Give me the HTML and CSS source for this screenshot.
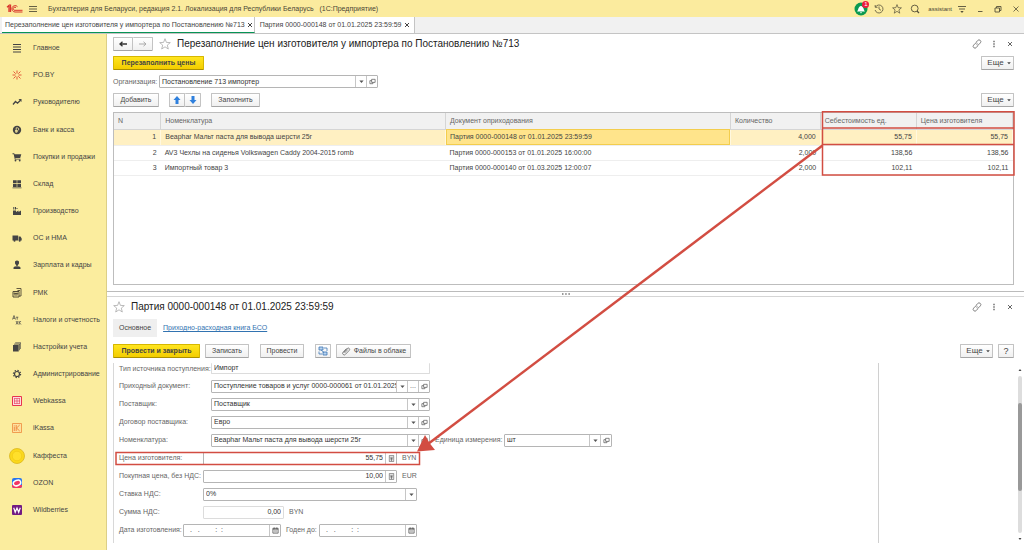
FILE: index.html
```html
<!DOCTYPE html>
<html lang="ru">
<head>
<meta charset="utf-8">
<title>Бухгалтерия для Беларуси</title>
<link rel="stylesheet" href="styles.css">
</head>
<body>
<svg class="defs" aria-hidden="true">
  <symbol id="star" viewBox="0 0 12 12"><path d="M6 .7l1.400 3.700 3.900.2-3 2.500 1 3.900L6 8.800 2.700 11l1-3.900-3-2.500 3.900-.2z" fill="none" stroke="currentColor" stroke-width=".8"/></symbol>
  <symbol id="open" viewBox="0 0 8 8"><path d="M3 1.500h4v3.500H3zM3 3H1v3.500h3.500V5" fill="none" stroke="currentColor" stroke-width=".8"/></symbol>
  <symbol id="down" viewBox="0 0 6 6"><path d="M1.200 2.200h3.600L3 4.300z" fill="currentColor"/></symbol>
  <symbol id="calc" viewBox="0 0 8 8"><path d="M1.500.5h5v7h-5zM2 2.500h4M2.500 4h3M2.500 5.500h3M4 3v4" fill="none" stroke="currentColor" stroke-width=".7"/></symbol>
  <symbol id="cal" viewBox="0 0 8 8"><path d="M1 1.500h6V7H1zM1 2.500h6M2.500 0.500v2M5.500.5v2" fill="none" stroke="currentColor" stroke-width=".9"/><path d="M2 4.200h4M2 5.500h4" stroke="currentColor" stroke-width=".5"/></symbol>
  <symbol id="link" viewBox="0 0 10 10"><path d="M4.200 3.200l1.500-1.700a1.700 1.700 0 0 1 2.700 2.300L6.800 5.600a1.600 1.600 0 0 1-2.300 0M5.800 6.800L4.300 8.500a1.700 1.700 0 0 1-2.700-2.300l1.600-1.800a1.600 1.600 0 0 1 2.300 0" fill="none" stroke="currentColor" stroke-width=".8"/></symbol>
  <symbol id="dots" viewBox="0 0 8 8"><path d="M3.300.8h1.400v1.400H3.300zM3.300 3.300h1.400v1.400H3.300zM3.300 5.800h1.400v1.400H3.300z" fill="currentColor"/></symbol>
  <symbol id="cross" viewBox="0 0 8 8"><path d="M2 2l4 4M6 2L2 6" stroke="currentColor" fill="none"/></symbol>
</svg>

<header class="titlebar">
  <svg class="logo" viewBox="0 0 18 12"><path d="M1 4.200L3 2.500V9M4.500 9V1.500" fill="none" stroke="#d9342b" stroke-width="1.300"/><path d="M11.500 3.700A3.200 3.200 0 1 0 9 9h7.500M10 4.800A1.600 1.600 0 1 0 9 7.300h7.500" fill="none" stroke="#d9342b" stroke-width="1"/></svg>
  <button class="icon-btn" aria-label="Меню"><svg viewBox="0 0 10 10"><path d="M1 2.500h8M1 5h8M1 7.500h8" stroke="#55503a" stroke-width=".9"/></svg></button>
  <span class="app-name">Бухгалтерия для Беларуси, редакция 2.1. Локализация для Республики Беларусь &nbsp; (1С:Предприятие)</span>
  <div class="tools">
    <button class="bell" aria-label="Уведомления"><svg viewBox="0 0 14 14"><circle cx="7" cy="7" r="6.500" fill="#0b9a50"/><path d="M3 9.500c1.500-1 1-5 4-5.500 3 .5 2.500 4.500 4 5.500zM5.800 10.300h2.400L7 11.500z" fill="#fff"/></svg><span class="badge">1</span></button>
    <button class="icon-btn" aria-label="История"><svg viewBox="0 0 10 10"><path d="M1.500 3a4 4 0 1 1-.4 3M1.200 1v2.300h2.300M5 2.500V5l2 1.300" fill="none" stroke="#55503a" stroke-width=".8"/></svg></button>
    <button class="icon-btn" aria-label="Избранное"><svg><use href="#star"/></svg></button>
    <button class="icon-btn" aria-label="Поиск"><svg viewBox="0 0 10 10"><circle cx="4.700" cy="4.500" r="3.400" fill="none" stroke="#55503a" stroke-width=".9"/><path d="M7 7l2 2" stroke="#55503a" stroke-width="1.300"/></svg></button>
    <span class="user">assistant</span>
    <button class="icon-btn" aria-label="Настройки"><svg viewBox="0 0 10 10"><path d="M1 2.500h8M2 5h6" stroke="#55503a" stroke-width=".9"/><path d="M3.300 7h3.400L5 9z" fill="#55503a"/></svg></button>
    <button class="icon-btn" aria-label="Свернуть"><svg viewBox="0 0 10 10"><path d="M3 7.500h4.500" stroke="#55503a" stroke-width=".9"/></svg></button>
    <button class="icon-btn" aria-label="Окно"><svg viewBox="0 0 10 10"><path d="M2 4h4.500v4H2zM3.500 4V2.500h4.500v4H6.500" fill="none" stroke="#55503a" stroke-width=".9"/></svg></button>
    <button class="icon-btn" aria-label="Закрыть"><svg viewBox="0 0 10 10"><path d="M2.500 2.500l5 5M7.500 2.500l-5 5" stroke="#55503a" stroke-width=".8"/></svg></button>
  </div>
</header>

<div class="tabs">
  <div class="tab active"><span>Перезаполнение цен изготовителя у импортера по Постановлению №713</span><button aria-label="Закрыть вкладку"><svg><use href="#cross"/></svg></button></div>
  <div class="tab"><span>Партия 0000-000148 от 01.01.2025 23:59:59</span><button aria-label="Закрыть вкладку"><svg><use href="#cross"/></svg></button></div>
</div>

<div class="body">
<nav class="side">
  <a href="#"><svg viewBox="0 0 12 12"><path d="M2 2.500h8M2 5h8M2 7.500h8M2 10h8" stroke="#444" stroke-width="1.200"/></svg>Главное</a>
  <a href="#"><svg viewBox="0 0 12 12"><path d="M6 1.500v3M6 7.500v3M1.500 6h3M7.500 6h3M2.500 2.500l2.200 2.200M7.300 7.300l2.200 2.200M9.500 2.500L7.300 4.700M4.700 7.300L2.500 9.500" stroke="#e0492f" stroke-width=".9"/></svg>PO.BY</a>
  <a href="#"><svg viewBox="0 0 12 12"><path d="M2 8.500l2.500-3 2 1.700 3-3" fill="none" stroke="#444" stroke-width="1.300"/><path d="M7.500 3h3v3z" fill="#444"/></svg>Руководителю</a>
  <a href="#"><svg viewBox="0 0 12 12"><circle cx="6" cy="6" r="4.200" fill="#444"/><path d="M5.200 9V3.800h1.500a1.400 1.400 0 0 1 0 2.700H4M4 7.700h3" fill="none" stroke="#fbed9e" stroke-width=".8"/></svg>Банк и касса</a>
  <a href="#"><svg viewBox="0 0 12 12"><path d="M1.500 2.300h1.700l.4 1h6.700L9.200 7H4.300l.2.700h5v.8H3.800L2.700 3.200H1.500z" fill="#444"/><circle cx="4.500" cy="9.500" r=".9" fill="#444"/><circle cx="8.700" cy="9.500" r=".9" fill="#444"/></svg>Покупки и продажи</a>
  <a href="#"><svg viewBox="0 0 12 12"><path d="M2 2.300h3.700v3H2zM6.300 2.300H10v3H6.300zM2 5.900h3.700v3H2zM6.300 5.900H10v3H6.300zM1.500 9.500h9v.8h-9z" fill="#444"/></svg>Склад</a>
  <a href="#"><svg viewBox="0 0 12 12"><path d="M2 10V5.500h3V7l2.500-1.500V7L10 5.500V10zM2.300 2h1v2.500h-1zM4 2h1v2.500H4zM5.500 3h1v1h-1z" fill="#444"/></svg>Производство</a>
  <a href="#"><svg viewBox="0 0 12 12"><path d="M1.500 3.500h5.700v5H1.500zM7.700 4.500h1.800l1.200 2v2h-3z" fill="#444"/><circle cx="3.500" cy="8.800" r="1" fill="#444"/><circle cx="8.700" cy="8.800" r="1" fill="#444"/></svg>ОС и НМА</a>
  <a href="#"><svg viewBox="0 0 12 12"><path d="M4 2.500q2-2 4 0v2L7 6v.8H5V6L4 4.500zM2.500 10V8.500Q3 7.200 6 7.200t3.500 1.300V10z" fill="#444"/></svg>Зарплата и кадры</a>
  <a href="#"><svg viewBox="0 0 12 12"><path d="M2 4.500h6V10H2z" fill="#fbed9e" stroke="#514a35"/><path d="M5.500 1.500H10V9H8M6.500 3.500H9M3.200 6h1.300v1H3.200zM5.500 6h1.300v1H5.500zM3.200 8h3.500" stroke="#514a35" fill="none" stroke-width=".9"/></svg>РМК</a>
  <a href="#"><svg viewBox="0 0 12 12"><path d="M1.500 5.500l1.500-4 1.500 4M2 4.300h2M5 3.200h2.300M6.200 3.200v2.500M5 7l2 3.500M7 7l-2 3.500M8.200 7v3.500M10 7L8.500 8.700 10 10.500" fill="none" stroke="#444" stroke-width=".7"/></svg>Налоги и отчетность</a>
  <a href="#"><svg viewBox="0 0 12 12"><path d="M2 4h5.700v6.500H2zM3 2.700h5.900v6.500h-.7V3.500H3zM4.200 1.500H10v6.500h-.6V2.200H4.200z" fill="#444"/></svg>Настройки учета</a>
  <a href="#"><svg viewBox="0 0 12 12"><circle cx="6" cy="6" r="2.500" fill="none" stroke="#444" stroke-width="1.200"/><circle cx="6" cy="6" r="3.600" fill="none" stroke="#444" stroke-width="1.200" stroke-dasharray="1.410"/></svg>Администрирование</a>
  <a href="#"><svg viewBox="0 0 12 12"><path d="M1.500 1.500h9v9h-9z" fill="#fbdde0" stroke="#e8344e"/><path d="M3 3.500h6M3 6h6M3 8.500h6M3.500 3.500v5M6 3.500v5M8.500 3.500v5" stroke="#e8344e" stroke-width=".6"/></svg>Webkassa</a>
  <a href="#"><svg viewBox="0 0 12 12"><path d="M1.500 1.500h9v9h-9z" fill="#fde2a0" stroke="#ee8a3c" stroke-width=".8"/><path d="M3.300 4.500V9M3.300 3v.6M5.200 3v6M8.700 3L5.500 6l3.200 3" fill="none" stroke="#ee7a2c" stroke-width=".8"/></svg>iKassa</a>
  <a href="#"><svg class="big" viewBox="0 0 16 16"><circle cx="8" cy="8" r="7.500" fill="#fbd91c" stroke="#d9b520" stroke-width=".8"/><circle cx="8" cy="8" r="4.800" fill="#ffe02b" stroke="#efc512" stroke-width=".6"/></svg>Каффеста</a>
  <a href="#"><svg viewBox="0 0 12 12"><rect x="1" y="1" width="10" height="10" rx="2" fill="#2775ee"/><path d="M1 8h10v1q0 2-2 2H3q-2 0-2-2z" fill="#f33562"/><ellipse cx="6" cy="6" rx="3.800" ry="2.600" fill="#f33562" stroke="#fff" stroke-width="1.500" transform="rotate(-20 6 6)"/></svg>OZON</a>
  <a href="#"><svg viewBox="0 0 12 12"><rect x="1" y="1" width="10" height="10" rx="1" fill="#721b83"/><path d="M2.700 3.700l1.500 4.500L6 4l1.700 4.200 1.600-4.500" fill="none" stroke="#fff" stroke-width="1.200"/></svg>Wildberries</a>
</nav>

<main>
<section class="pane upper">
  <div class="row head">
    <div class="pair"><button class="btn" aria-label="Назад"><svg viewBox="0 0 10 8"><path d="M9 4H2.500M4.500 1.800L2 4l2.500 2.200" fill="none" stroke="#333" stroke-width="1.300"/></svg></button><button class="btn" aria-label="Вперед"><svg viewBox="0 0 10 8"><path d="M1 4h6.500M5.500 1.800L8 4 5.500 6.200" fill="none" stroke="#aaa"/></svg></button></div>
    <svg class="star"><use href="#star"/></svg>
    <h1>Перезаполнение цен изготовителя у импортера по Постановлению №713</h1>
    <div class="pane-tools"><button aria-label="Ссылка"><svg><use href="#link"/></svg></button><button aria-label="Меню"><svg><use href="#dots"/></svg></button><button aria-label="Закрыть"><svg><use href="#cross"/></svg></button></div>
  </div>
  <div class="row"><button class="btn primary refill">Перезаполнить цены</button><button class="btn more">Еще<svg><use href="#down"/></svg></button></div>
  <div class="row org"><label for="org">Организация:</label><div class="field"><input id="org" value="Постановление 713 импортер"><button aria-label="Выбрать"><svg><use href="#down"/></svg></button><button aria-label="Открыть"><svg><use href="#open"/></svg></button></div></div>
  <div class="row"><button class="btn add">Добавить</button>
    <div class="pair arrows"><button class="btn" aria-label="Вверх"><svg viewBox="0 0 10 10"><path d="M5 1l3.500 4h-2v4h-3V5h-2z" fill="#2f80dd"/></svg></button><button class="btn" aria-label="Вниз"><svg viewBox="0 0 10 10"><path d="M5 9L1.500 5h2V1h3v4h2z" fill="#2f80dd"/></svg></button></div>
    <button class="btn fill">Заполнить</button><button class="btn more">Еще<svg><use href="#down"/></svg></button></div>
  <div class="grid-box">
    <table>
      <colgroup><col class="c-n"><col class="c-item"><col class="c-doc"><col class="c-qty"><col class="c-cost"><col class="c-price"></colgroup>
      <thead><tr><th>N</th><th>Номенклатура</th><th>Документ оприходования</th><th>Количество</th><th>Себестоимость ед.</th><th>Цена изготовителя</th></tr></thead>
      <tbody>
        <tr class="selected"><td class="num">1</td><td>Beaphar Мальт паста для вывода шерсти 25г</td><td class="current">Партия 0000-000148 от 01.01.2025 23:59:59</td><td class="num">4,000</td><td class="num">55,75</td><td class="num">55,75</td></tr>
        <tr><td class="num">2</td><td>AV3 Чехлы на сиденья Volkswagen Caddy 2004-2015 romb</td><td>Партия 0000-000153 от 01.01.2025 16:00:00</td><td class="num">2,000</td><td class="num">138,56</td><td class="num">138,56</td></tr>
        <tr><td class="num">3</td><td>Импортный товар 3</td><td>Партия 0000-000140 от 01.03.2025 12:00:07</td><td class="num">2,000</td><td class="num">102,11</td><td class="num">102,11</td></tr>
      </tbody>
    </table>
  </div>
</section>

<div class="splitter"><svg viewBox="0 0 10 4"><path d="M1 2h1.500M4.200 2h1.500M7.400 2h1.500" stroke="#777" stroke-width="1.300"/></svg></div>

<section class="pane lower">
  <div class="row head">
    <svg class="star"><use href="#star"/></svg>
    <h1>Партия 0000-000148 от 01.01.2025 23:59:59</h1>
    <div class="pane-tools"><button aria-label="Ссылка"><svg><use href="#link"/></svg></button><button aria-label="Меню"><svg><use href="#dots"/></svg></button><button aria-label="Закрыть"><svg><use href="#cross"/></svg></button></div>
  </div>
  <div class="row pages"><span class="page">Основное</span><a href="#">Приходно-расходная книга БСО</a></div>
  <div class="row commands">
    <button class="btn primary post">Провести и закрыть</button><button class="btn save">Записать</button><button class="btn run">Провести</button>
    <button class="btn sq" aria-label="Структура"><svg viewBox="0 0 10 10"><path d="M1 1h4v3H1zM5 6h4v3H5z" fill="#b8d3ef" stroke="#3d77b5" stroke-width=".8"/><path d="M6 2h3v3M4 8H1V5.500M3 4l3 2.500" fill="none" stroke="#3d77b5" stroke-width=".8"/></svg></button>
    <button class="btn files"><svg viewBox="0 0 10 10"><path d="M2.500 6.500l3.800-4a1.200 1.200 0 0 1 2 1.800L4.500 8.300a1.600 1.600 0 0 1-2.500-2L5.500 2.500M3.500 7l3.300-3.500" fill="none" stroke="#666" stroke-width=".8"/></svg>Файлы в облаке</button>
    <button class="btn more">Еще<svg><use href="#down"/></svg></button><button class="btn sq help">?</button>
  </div>
  <div class="scroller">
    <form class="form">
      <div class="line"><label class="wide" for="f1">Тип источника поступления:</label><div class="field readonly cut"><input id="f1" value="Импорт" readonly></div></div>
      <div class="line"><label class="wide" for="f2">Приходный документ:</label><div class="field"><input id="f2" value="Поступление товаров и услуг 0000-000061 от 01.01.2025"><button type="button" aria-label="Список"><svg><use href="#down"/></svg></button><button type="button" aria-label="Выбрать">...</button><button type="button" aria-label="Открыть"><svg><use href="#open"/></svg></button></div></div>
      <div class="line"><label class="wide" for="f3">Поставщик:</label><div class="field"><input id="f3" value="Поставщик"><button type="button" aria-label="Список"><svg><use href="#down"/></svg></button><button type="button" aria-label="Открыть"><svg><use href="#open"/></svg></button></div></div>
      <div class="line"><label class="wide" for="f4">Договор поставщика:</label><div class="field"><input id="f4" value="Евро"><button type="button" aria-label="Список"><svg><use href="#down"/></svg></button><button type="button" aria-label="Открыть"><svg><use href="#open"/></svg></button></div></div>
      <div class="line"><label class="wide" for="f5">Номенклатура:</label><div class="field"><input id="f5" value="Beaphar Мальт паста для вывода шерсти 25г"><button type="button" aria-label="Список"><svg><use href="#down"/></svg></button><button type="button" aria-label="Открыть"><svg><use href="#open"/></svg></button></div><label class="unit-label" for="f6">Единица измерения:</label><div class="field unit"><input id="f6" value="шт"><button type="button" aria-label="Список"><svg><use href="#down"/></svg></button><button type="button" aria-label="Открыть"><svg><use href="#open"/></svg></button></div></div>
      <div class="line"><label for="f7">Цена изготовителя:</label><div class="field price"><input id="f7" class="right" value="55,75"><button type="button" aria-label="Калькулятор"><svg><use href="#calc"/></svg></button></div><span class="cur">BYN</span></div>
      <div class="line"><label for="f8">Покупная цена, без НДС:</label><div class="field price"><input id="f8" class="right" value="10,00"><button type="button" aria-label="Калькулятор"><svg><use href="#calc"/></svg></button></div><span class="cur">EUR</span></div>
      <div class="line"><label for="f9">Ставка НДС:</label><div class="field rate"><input id="f9" value="0%"><button type="button" aria-label="Список"><svg><use href="#down"/></svg></button></div></div>
      <div class="line"><label for="f10">Сумма НДС:</label><div class="field readonly sum"><input id="f10" class="right" value="0,00" readonly></div><span class="cur">BYN</span></div>
      <div class="line"><label class="narrow" for="f11">Дата изготовления:</label><div class="field date"><input id="f11" value="  .   .        :  :"><button type="button" aria-label="Календарь"><svg><use href="#cal"/></svg></button></div><label class="until" for="f12">Годен до:</label><div class="field date"><input id="f12" value="  .   .        :  :"><button type="button" aria-label="Календарь"><svg><use href="#cal"/></svg></button></div></div>
    </form>
    <div class="aside"></div>
    <div class="scrollbar"><svg viewBox="0 0 6 6"><path d="M1.500 4h3L3 2z" fill="#444"/></svg><div class="track"><div class="thumb"></div></div><svg viewBox="0 0 6 6"><path d="M1.500 2h3L3 4z" fill="#444"/></svg></div>
  </div>
</section>
</main>
</div>

<svg class="notes" viewBox="0 0 1024 550" aria-hidden="true">
  <g fill="none" stroke="#d24d42" stroke-width="1.500">
    <path d="M822.500 111.800h191.500v63.200H822.500zM822.500 128h191.500M822.500 144.500h191.500"/>
    <path d="M116 452.500h303.500v12H116z"/>
    <path d="M822.500 145.500L428 444" stroke-width="2.500"/>
  </g>
  <path d="M417 451.500l8-16.500 4.500 8 5.500 7z" fill="#d24d42"/>
</svg>
</body>
</html>
```
FILE: styles.css
```css
* { box-sizing: border-box; }
body {
  margin: 0;
  min-height: 100vh;
  display: flex;
  flex-direction: column;
  position: relative;
  background: #fff;
  color: #444;
  font: 7px/10px "Liberation Sans", Arial, sans-serif;
}
svg { display: block; flex: none; }
button, input { font: inherit; color: inherit; margin: 0; padding: 0; border: 0; background: none; }
button { display: flex; align-items: center; justify-content: center; white-space: nowrap; }
a { color: inherit; text-decoration: none; }
.defs { position: absolute; width: 0; height: 0; }
.notes { position: absolute; left: 0; top: 0; width: 1024px; height: 550px; pointer-events: none; }

.titlebar { display: flex; align-items: center; height: 17px; padding: 0 3px 0 6px; background: #fbeb9e; color: #4a4636; }
.logo { width: 18px; height: 12px; margin-right: 4px; }
.icon-btn, .icon-btn svg { width: 10px; height: 10px; }
.app-name { margin-left: 10px; }
.tools { display: flex; align-items: center; gap: 8px; margin-left: auto; }
.user { font-size: 6px; margin-right: -3px; }
.bell { position: relative; margin-right: -2px; }
.bell svg { width: 14px; height: 14px; }
.badge { position: absolute; top: -1px; right: -1px; width: 7px; height: 7px; border-radius: 4px; background: #ed1c3c; color: #fff; font-size: 6px; line-height: 7px; }

.tabs { display: flex; height: 17px; background: #f1f1f1; border-bottom: 1px solid #c4c4c4; }
.tab { display: flex; align-items: center; gap: 1px; padding: 0 3px 0 5px; background: #fff; border-right: 1px solid #c4c4c4; }
.tab.active { margin-left: 2px; padding: 0 0 0 3px; border-bottom: 1px solid #079455; }
.tab svg { width: 8px; height: 8px; }

.body { display: flex; flex: 1; }
.side { display: flex; flex-direction: column; justify-content: space-between; width: 107px; padding: 4px 0 30px 9px; background: #fbed9e; border-right: 1px solid #dccf87; }
.side a { display: flex; align-items: center; gap: 8px; height: 20px; white-space: nowrap; }
.side svg { width: 12px; height: 12px; margin: 0 2px; }
.side .big { width: 16px; height: 16px; margin: 0; }

main { display: flex; flex-direction: column; flex: 1; min-width: 0; }
.pane { display: flex; flex-direction: column; }
.upper { padding: 3px 10px 6px 6px; gap: 5px; }
.row { display: flex; align-items: center; min-height: 14px; }
.row.org { min-height: 13px; }
h1 { margin: 0; font-size: 10px; line-height: 14px; font-weight: 400; color: #222; }
.star { width: 12px; height: 12px; color: #aaa; }
.upper .star { margin: 0 6px; }
.lower .star { margin-right: 6px; }
.pane-tools { display: flex; align-items: center; gap: 8px; margin-left: auto; color: #666; }
.pane-tools svg { width: 8px; height: 8px; }
.pane-tools button:first-child svg { width: 10px; height: 10px; }

.btn { height: 14px; border: 1px solid #c3c3c3; border-bottom-color: #a5a5a5; border-radius: 1px; background: linear-gradient(#fff, #f0f0f0); }
.btn svg { width: 10px; height: 10px; }
.pair { display: flex; }
.pair .btn { width: 20px; }
.pair .btn + .btn { border-left: 0; }
.arrows { margin: 0 10px; }
.arrows .btn { width: 16px; }
.primary { background: linear-gradient(#ffe51f, #f3cd00); border-color: #d6b700; border-bottom-color: #ab9000; font-weight: 700; }
.refill { width: 91px; }
.add { width: 46px; }
.fill { width: 49px; }
.more { width: 33px; margin-left: auto; font-size: 8px; padding-left: 4px; }
.more svg { width: 6px; height: 6px; margin-left: 2px; }

.field { display: flex; height: 13px; width: 219px; border: 1px solid #b5b5b5; border-radius: 1px; background: #fff; }
.field input { flex: 1; min-width: 0; padding: 0 0 0 2px; color: #333; outline: 0; }
.field button { width: 11px; border-left: 1px solid #c6c6c6; color: #555; }
.field svg { width: 7px; height: 7px; }
.field .right { padding-right: 2px; text-align: right; }
.field.readonly { border-color: #dcdcdc; }
.field.cut { height: 11px; border-top: 0; }
.org label { width: 46px; color: #666; }

.grid-box { height: 173px; border: 1px solid #bdbdbd; }
table { width: 100%; border-collapse: collapse; table-layout: fixed; }
.c-n { width: 5.2%; }
.c-item { width: 31.7%; }
.c-doc { width: 31.7%; }
.c-qty { width: 10%; }
.c-cost { width: 10.7%; }
.c-price { width: 10.7%; }
th, td { height: 15px; padding: 0 4px; border-bottom: 1px solid #eee; text-align: left; font-weight: 400; }
th, .selected td { height: 16px; }
th { background: #f1f1f1; border-right: 1px solid #d5d5d5; border-bottom-color: #d5d5d5; color: #666; }
.num { text-align: right; }
.selected td { background: #fff0c2; border-right: 1px solid #fff8df; }
.selected .current { background: #ffe48b; outline: 1px solid #f3cd4d; outline-offset: -1px; }

.splitter { display: flex; justify-content: center; align-items: center; height: 6px; border-top: 1px solid #bbb; border-bottom: 1px solid #d5d5d5; }
.splitter svg { width: 10px; height: 4px; }

.lower { flex: 1; padding-left: 6px; }
.lower .row { margin-right: 10px; }
.lower .head { min-height: 20px; }
.pages { gap: 6px; margin-top: 2px; }
.page { padding: 4px 6px; background: #efefef; }
.pages a { color: #3273b1; text-decoration: underline; }
.lower .commands { margin-top: 7px; margin-bottom: 5px; }
.post { width: 87px; margin-right: 5px; }
.save { width: 44px; margin-right: 11px; }
.run { width: 44px; margin-right: 11px; }
.sq { width: 16px; }
.files { width: 75px; margin-left: 5px; gap: 3px; }
.help { margin-left: 5px; font-size: 9px; }

.scroller { display: flex; flex: 1; }
.form { flex: none; width: 766px; height: 180px; padding-left: 5px; border-left: 1px solid #d8d8d8; border-right: 1px solid #d0d0d0; }
.line { display: flex; align-items: center; height: 18px; }
.line:first-child { height: 11px; margin-bottom: 3px; }
.line label { width: 84px; color: #666; white-space: nowrap; }
.line .wide { width: 92px; }
.line .narrow { width: 64px; }
.line .unit-label { width: 69px; margin-left: 5px; }
.line .until { width: 33px; margin-left: 5px; }
.field.unit { width: 108px; }
.field.price { width: 194px; }
.field.rate { width: 214px; }
.field.sum { width: 81px; }
.field.date { width: 98px; }
.cur { margin-left: 5px; color: #666; }
.aside { flex: 1; }
.scrollbar { display: flex; flex-direction: column; align-items: center; gap: 3px; width: 8px; padding: 4px 0 8px; }
.scrollbar svg { width: 6px; height: 6px; }
.track { flex: 1; width: 4px; border-radius: 2px; background: #ddd; padding-top: 27px; }
.thumb { height: 88px; border-radius: 2px; background: #999; }
```
